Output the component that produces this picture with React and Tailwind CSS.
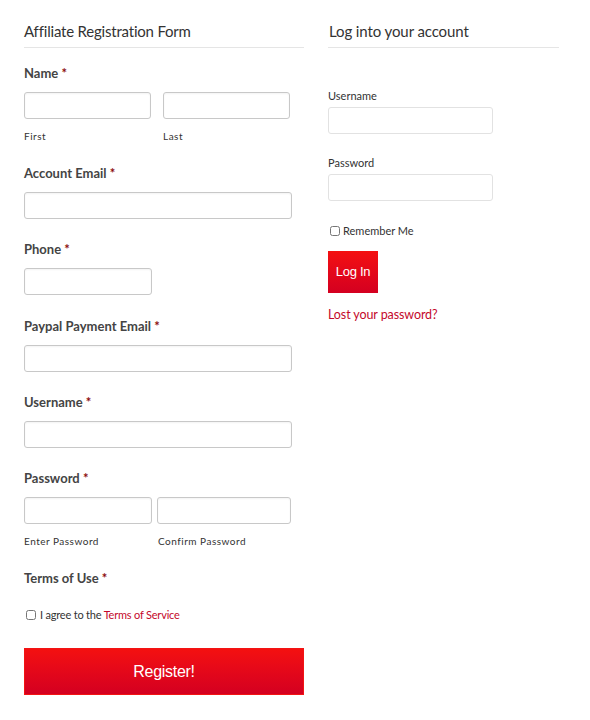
export default function App() {
  const font = { fontFamily: "Lato, 'Open Sans', sans-serif" };
  const input = "block h-[27px] rounded-[3px] border border-[#c8c8c8] bg-white shadow-[inset_0_1px_2px_rgba(0,0,0,0.05)]";
  const label = "text-[13px] leading-[18px] font-bold text-[#444]";
  const star = <span className="text-[#8b0b0b]">*</span>;
  const hint = "text-[10px] leading-[14px] text-[#333] tracking-[0.5px]";

  return (
    <div className="min-h-[720px] bg-white pt-[20px] pl-[24px] flex gap-[24px]" style={font}>
      {/* registration */}
      <div className="w-[280px] flex flex-col">
        <h3 className="text-[15px] leading-[22px] tracking-[-0.2px] text-[#333] pb-[5px] border-b border-[#e5e5e5]">
          Affiliate Registration Form
        </h3>

        <div className={`${label} mt-[16px]`}>Name {star}</div>
        <div className="flex gap-[12px] mt-[10px]">
          <div className="w-[127px]">
            <input className={`${input} w-full`} />
            <div className={`${hint} mt-[10px]`}>First</div>
          </div>
          <div className="w-[127px]">
            <input className={`${input} w-full`} />
            <div className={`${hint} mt-[10px]`}>Last</div>
          </div>
        </div>

        <div className={`${label} mt-[21px]`}>Account Email {star}</div>
        <input className={`${input} w-[268px] mt-[10px]`} />

        <div className={`${label} mt-[21px]`}>Phone {star}</div>
        <input className={`${input} w-[128px] mt-[10px]`} />

        <div className={`${label} mt-[22px]`}>Paypal Payment Email {star}</div>
        <input className={`${input} w-[268px] mt-[10px]`} />

        <div className={`${label} mt-[21px]`}>Username {star}</div>
        <input className={`${input} w-[268px] mt-[10px]`} />

        <div className={`${label} mt-[21px]`}>Password {star}</div>
        <div className="flex gap-[5px] mt-[10px]">
          <div className="w-[128px]">
            <input type="password" className={`${input} w-full`} />
            <div className={`${hint} mt-[10px]`}>Enter Password</div>
          </div>
          <div className="w-[134px]">
            <input type="password" className={`${input} w-full`} />
            <div className={`${hint} mt-[10px] pl-[1px]`}>Confirm Password</div>
          </div>
        </div>

        <div className={`${label} mt-[21px]`}>Terms of Use {star}</div>
        <label className="flex items-center gap-[4px] mt-[20px] text-[11px] leading-[16px] tracking-[-0.2px] text-[#333]">
          <input type="checkbox" className="ml-[2px] w-[10px] h-[10px]" />
          <span>
            I agree to the <span className="text-[#c4082b]">Terms of Service</span>
          </span>
        </label>

        <button
          className="mt-[25px] h-[47px] w-full bg-gradient-to-b from-[#f41010] to-[#d40020] border border-[#f21414] text-white text-[16px] tracking-[-0.3px]"
          style={{ fontFamily: "'Liberation Sans', Arial, sans-serif" }}
        >
          Register!
        </button>
      </div>

      {/* login */}
      <div className="w-[231px] flex flex-col">
        <h3 className="text-[15px] leading-[22px] tracking-[-0.1px] text-[#333] pb-[5px] border-b border-[#e5e5e5] pl-[1px]">
          Log into your account
        </h3>

        <div className="text-[11px] leading-[15px] text-[#333] mt-[40px]">Username</div>
        <input className="block h-[27px] w-[165px] mt-[4px] rounded-[3px] border border-[#e2e2e2] bg-white" />

        <div className="text-[11px] leading-[15px] text-[#333] mt-[21px]">Password</div>
        <input type="password" className="block h-[27px] w-[165px] mt-[4px] rounded-[3px] border border-[#e2e2e2] bg-white" />

        <label className="flex items-center gap-[3px] mt-[22px] text-[11px] leading-[15px] text-[#333]">
          <input type="checkbox" className="ml-[2px] w-[10px] h-[10px]" />
          <span>Remember Me</span>
        </label>

        <button
          className="mt-[13px] h-[42px] w-[50px] bg-gradient-to-b from-[#f41010] to-[#d40020] text-white text-[13px] tracking-[-0.3px]"
          style={{ fontFamily: "'Liberation Sans', Arial, sans-serif" }}
        >
          Log In
        </button>

        <a className="mt-[13px] text-[12.5px] leading-[18px] tracking-[-0.1px] text-[#c4082b]">Lost your password?</a>
      </div>
    </div>
  );
}
